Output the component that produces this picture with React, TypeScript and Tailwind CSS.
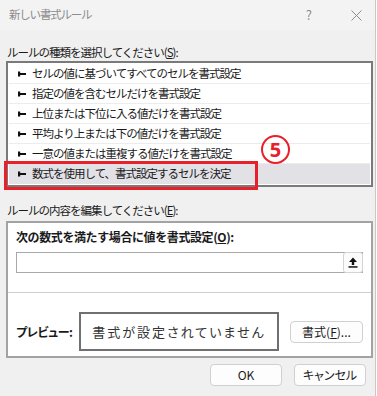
const rules = [
  "セルの値に基づいてすべてのセルを書式設定",
  "指定の値を含むセルだけを書式設定",
  "上位または下位に入る値だけを書式設定",
  "平均より上または下の値だけを書式設定",
  "一意の値または重複する値だけを書式設定",
  "数式を使用して、書式設定するセルを決定",
];

function RuleMark() {
  return (
    <svg width="9" height="6" viewBox="0 0 9 6" className="shrink-0">
      <rect x="0" y="0.5" width="2.2" height="5" fill="#111" />
      <rect x="0" y="2" width="8" height="2" fill="#111" />
    </svg>
  );
}

function UploadIcon() {
  return (
    <svg width="10" height="11" viewBox="0 0 10 11">
      <path d="M5 0.5 L9 5 L6.2 5 L6.2 8 L3.8 8 L3.8 5 L1 5 Z" fill="#111" />
      <rect x="0.5" y="9.2" width="9" height="1.5" fill="#111" />
    </svg>
  );
}

export default function App() {
  return (
    <div className="relative w-[377px] h-[396px] overflow-hidden bg-[#f0f0f0] text-[12px] text-[#1a1a1a] font-['Noto_Sans_CJK_JP','Noto_Sans',sans-serif]">
      {/* Title bar */}
      <div className="flex h-[30px] items-center bg-[#f3f3f3] pl-[9px]">
        <span className="text-[11.5px] tracking-[-1.2px] text-[#8c8c8c]">新しい書式ルール</span>
        <span className="ml-auto mr-[39px] text-[13px] text-[#8c8c8c]">?</span>
        <svg width="11" height="11" viewBox="0 0 11 11" className="mr-[15px]">
          <path d="M0.5 0.5 L10.5 10.5 M10.5 0.5 L0.5 10.5" stroke="#8c8c8c" strokeWidth="1" />
        </svg>
      </div>

      <div className="pl-[6px] pr-[4px] pt-[14px]">
        {/* Rule type */}
        <div className="h-[17px] leading-[16px] pl-[1px] text-[11.5px] tracking-[-1px]">
          ルールの種類を選択してください(<span className="underline">S</span>):
        </div>
        <div className="border-2 border-[#7a7a7a] bg-white p-[1px]">
          {rules.map((r, i) => (
            <div
              key={r}
              className={`flex h-[20px] items-center gap-[5px] pl-[9px] ${
                i === rules.length - 1 ? "bg-[#e1e1e6]" : "border-b border-[#ececec]"
              }`}
            >
              <RuleMark />
              <span className="text-[11.5px] tracking-[-1px]">{r}</span>
            </div>
          ))}
        </div>

        {/* Rule content */}
        <div className="mt-[15px] h-[19px] leading-[16px] pl-[1px] text-[11.5px] tracking-[-1px]">
          ルールの内容を編集してください(<span className="underline">E</span>):
        </div>
        <div className="border-2 border-[#a3a3a3] bg-white">
          <div className="px-[8px] pb-[19px] pt-[6px]">
            <div className="h-[17px] leading-[16px] font-bold tracking-[-0.4px]">
              次の数式を満たす場合に値を書式設定(<span className="underline">O</span>):
            </div>
            <div className="mt-[6px] flex h-[21px] border border-[#a8a8a8]">
              <div className="flex-1" />
              <button className="flex w-[20px] -my-[1px] -mr-[1px] items-center justify-center rounded-[3px] border border-[#d4d4d4] bg-[#fbfbfb]">
                <UploadIcon />
              </button>
            </div>
          </div>
          <div className="h-px bg-[#cfcfcf]" />
          <div className="flex items-center px-[8px] pb-[5px] pt-[19px] [font-feature-settings:'palt']">
            <span className="w-[63px] font-bold tracking-[-0.4px]">プレビュー:</span>
            <div className="flex h-[39px] w-[200px] items-center justify-center border-2 border-[#707070] text-[13px] tracking-[2px] text-[#333]">
              書式が設定されていません
            </div>
            <button className="ml-auto flex h-[22px] w-[73px] items-center justify-center rounded-[4px] border border-[#d0d0d0] bg-[#fdfdfd]">
              書式(<span className="underline">F</span>)...
            </button>
          </div>
        </div>

        {/* Footer */}
        <div className="mt-[6px] flex justify-end gap-[12px] pr-[7px] [font-feature-settings:'palt']">
          <button className="flex h-[22px] w-[72px] items-center justify-center rounded-[4px] border border-[#d0d0d0] bg-[#fdfdfd]">
            OK
          </button>
          <button className="flex h-[22px] w-[72px] items-center justify-center rounded-[4px] border border-[#d0d0d0] bg-[#fdfdfd]">
            キャンセル
          </button>
        </div>
      </div>

      {/* Annotation overlay */}
      <div className="absolute left-[4px] top-[161px] h-[29px] w-[254px] border-[3px] border-[#e8202a]" />
      <div className="absolute left-[261px] top-[135px] flex h-[29px] w-[29px] items-center justify-center rounded-full border-2 border-[#e8202a] text-[20px] font-bold leading-none text-[#e8202a] font-['Noto_Sans',sans-serif]">
        5
      </div>

      {/* Window edge */}
      <div className="absolute right-0 top-0 h-full w-[2px] border-l border-[#c8c8c8] bg-white" />
    </div>
  );
}
